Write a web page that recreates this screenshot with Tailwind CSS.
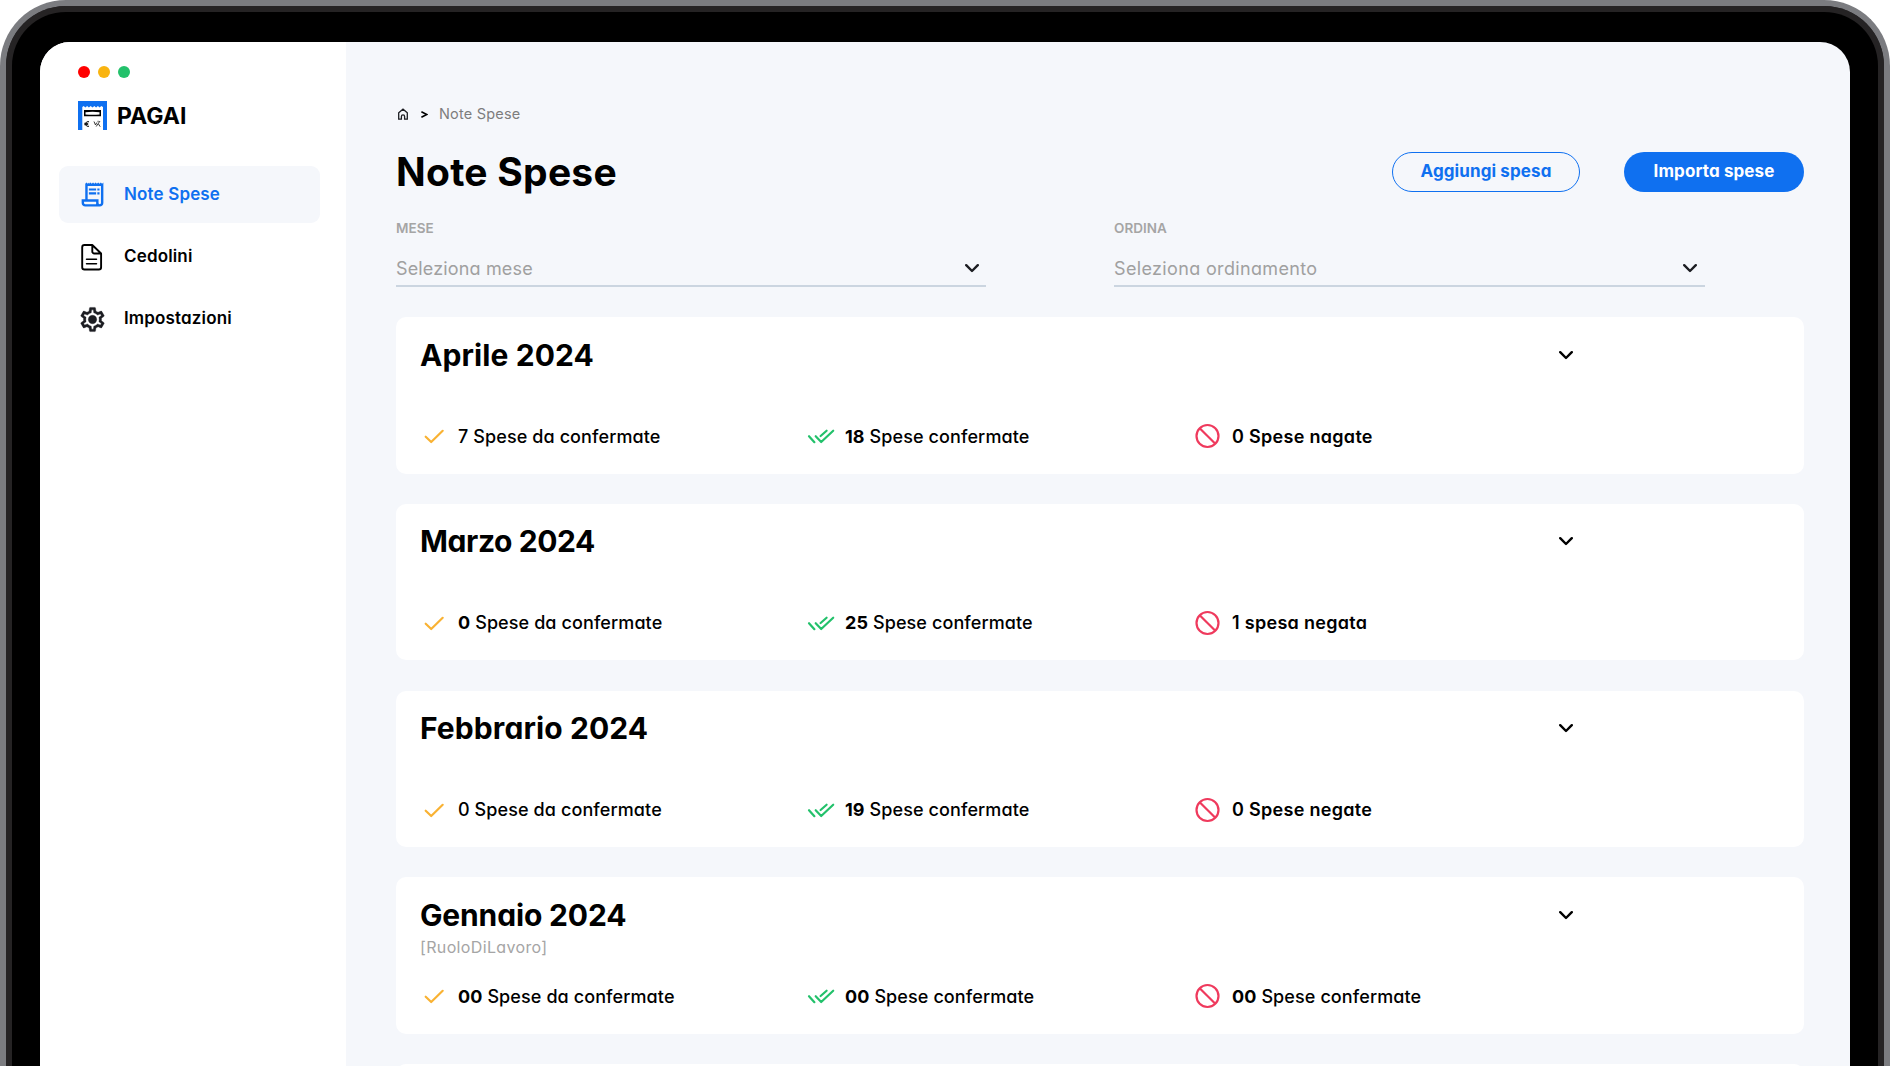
<!DOCTYPE html>
<html lang="it">
  <head>
    <meta charset="UTF-8" />
    <meta name="viewport" content="width=device-width, initial-scale=1.0" />
    <script src="https://cdn.jsdelivr.net/npm/@tailwindcss/browser@4"></script>
    <title>Pagai - Note Spese</title>
  </head>

<body class="h-screen overflow-hidden bg-white font-['Inter',sans-serif] [font-feature-settings:'cv11'] text-black">

<!-- Icons -->
<svg class="hidden" aria-hidden="true">
  <symbol id="chevron" viewBox="0 0 14 9" fill="none">
    <path d="M1.2 1.2 7 7 12.8 1.2" stroke="currentColor" stroke-width="2.4" stroke-linecap="round" stroke-linejoin="round" />
  </symbol>
  <symbol id="check" viewBox="0 0 28 28" fill="none">
    <path d="M5.7 14.7 11.2 20 22.7 8.8" stroke="#f9b233" stroke-width="2.2" stroke-linecap="round" stroke-linejoin="round" />
  </symbol>
  <symbol id="checks" viewBox="0 0 28 28" fill="none">
    <path d="M2 14.2 7.4 20.2M8.7 14.2 14.2 20 26.2 8.7M13.6 14 19.6 8.7" stroke="#23c16b" stroke-width="2.2" stroke-linecap="round" stroke-linejoin="round" />
  </symbol>
  <symbol id="ban" viewBox="0 0 28 28" fill="none">
    <circle cx="13.5" cy="14" r="11" stroke="#ef3a5d" stroke-width="2.2" />
    <path d="M5.7 6.2 21.3 21.8" stroke="#ef3a5d" stroke-width="2.2" />
  </symbol>
</svg>

<div class="h-screen w-[1890px] rounded-t-[66px] border-6 border-b-0 border-[#7b7c80] bg-[#252324]">
  <div class="h-full rounded-t-[60px] border-6 border-b-0 border-[#252324] bg-black px-7 pt-[30px]">
    <div class="flex h-full overflow-hidden rounded-t-[30px] bg-[#f5f7fb]">

      <!-- Sidebar -->
      <aside class="w-[306px] shrink-0 bg-white pl-[19px] pt-6">
        <div class="flex gap-2 pl-[19px]">
          <span class="size-3 rounded-full bg-[#ff0000]"></span>
          <span class="size-3 rounded-full bg-[#f9b410]"></span>
          <span class="size-3 rounded-full bg-[#23c16b]"></span>
        </div>

        <div class="mt-[23px] flex h-[29px] items-center pl-[19px]">
          <svg class="h-[29px] w-[29px]" viewBox="0 0 29 29">
            <path d="M0 0h29v29h-4V6l-1.700-1-1.700 1.400L19.900 5l-1.800 1.400L16.300 5l-1.800 1.400L12.700 5l-1.800 1.400L9.100 5 7.400 6.400 5.700 5 4.300 6V29H0z" fill="#0f70f0" />
            <path d="M6 9h17v6.300H6z" fill="#000" />
            <path d="M7.500 11.200q7-.9 14 0v2.200q-7 .9-14 0z" fill="#fff" />
            <path d="M11 20.800c-2-.8-3.200.5-3.200 2.200s1.200 3 3.200 2.200M6.300 22.300h3.900M6.300 23.700h3.900" fill="none" stroke="#000" stroke-width="1" />
            <path d="M16 20.500l1.500 3.500 1.300-2.500M22 20 18.200 25.500M19.500 20.300h1.200M20.500 23l1.700 2.700" fill="none" stroke="#222" stroke-width=".9" />
          </svg>
          <span class="ml-[10px] pt-0.5 text-[23px] font-bold">PAGAI</span>
        </div>

        <nav class="mt-9 flex w-[261px] flex-col gap-[5.300px] text-[17px] font-semibold tracking-[0.150px]">
          <a href="#" class="flex h-[57px] items-center gap-[17px] rounded-[9px] bg-[#f5f7fb] pl-[19px] text-[#0f70f0]">
            <svg class="size-[29px]" viewBox="0 0 24 24" fill="currentColor">
              <path d="M21 2l-1.070 1-1.070-1-1.070 1-1.070-1-1.070 1-1.070-1-1.070 1-1.070-1-1.070 1-1.070-1-1.070 1L9.200 2 8.130 3 7.070 2 6 3v13H3v3c0 1.660 1.340 3 3 3h12c1.660 0 3-1.340 3-3V2zM15 20H6c-.55 0-1-.45-1-1v-1h10v2zm4-1c0 .55-.45 1-1 1s-1-.45-1-1v-3H8V5h11v14z" />
              <path d="M9 7h6v1.700H9zM16 7h1.800v1.700H16zM9 10.200h6v1.700H9zM16 10.200h1.800v1.700H16z" />
            </svg>
            Note Spese
          </a>
          <a href="#" class="flex h-[57px] items-center gap-[17px] pl-[19px]">
            <svg class="size-[29px]" viewBox="0 0 29 29" fill="none" stroke="currentColor" stroke-width="1.900" stroke-linejoin="round">
              <path d="M14.300 3H6.500a2.300 2.300 0 0 0-2.300 2.300v19.900a2.300 2.300 0 0 0 2.300 2.300h14.300a2.300 2.300 0 0 0 2.300-2.300V11.500zM14.300 3v6.500a2 2 0 0 0 2 2H23" />
              <path d="M8.500 17.300h10M8.500 21.800h10" stroke-width="1.500" stroke-linecap="round" />
            </svg>
            Cedolini
          </a>
          <a href="#" class="flex h-[57px] items-center gap-[17px] pl-[19px]">
            <svg class="size-[29px] text-[#1c1d22]" viewBox="0 0 24 24" fill="currentColor" stroke="currentColor" stroke-width=".3">
              <path d="M19.430 12.980c.04-.32.07-.64.07-.98 0-.34-.03-.66-.07-.98l2.110-1.650c.19-.15.24-.42.12-.64l-2-3.460c-.09-.16-.26-.25-.44-.25-.06 0-.12.010-.17.030l-2.490 1c-.52-.4-1.080-.73-1.690-.98l-.38-2.650C14.460 2.180 14.250 2 14 2h-4c-.25 0-.46.18-.49.42l-.38 2.650c-.61.25-1.170.59-1.690.98l-2.490-1c-.06-.02-.12-.03-.18-.03-.17 0-.34.09-.43.25l-2 3.460c-.13.22-.07.49.12.64l2.110 1.650c-.04.32-.07.65-.07.98 0 .33.030.66.070.98l-2.110 1.650c-.19.15-.24.42-.12.64l2 3.460c.09.16.26.25.44.25.06 0 .12-.01.17-.03l2.490-1c.52.4 1.080.73 1.690.98l.38 2.650c.03.24.24.42.49.42h4c.25 0 .46-.18.49-.42l.38-2.650c.61-.25 1.170-.59 1.690-.98l2.490 1c.06.02.12.03.18.03.17 0 .34-.09.43-.25l2-3.460c.12-.22.07-.49-.12-.64l-2.110-1.650zm-1.980-1.710c.04.31.05.52.05.73 0 .21-.02.43-.05.73l-.14 1.130.89.7 1.080.84-.7 1.210-1.270-.51-1.040-.42-.9.68c-.43.32-.84.56-1.250.73l-1.060.43-.16 1.130-.2 1.350h-1.400l-.19-1.350-.16-1.130-1.060-.43c-.43-.18-.83-.41-1.230-.71l-.91-.7-1.060.43-1.270.51-.7-1.210 1.080-.84.89-.7-.14-1.130c-.03-.31-.05-.54-.05-.74s.02-.43.05-.73l.14-1.130-.89-.7-1.080-.84.7-1.210 1.270.51 1.040.42.9-.68c.43-.32.84-.56 1.250-.73l1.060-.43.16-1.130.2-1.350h1.390l.19 1.350.16 1.130 1.060.43c.43.18.83.41 1.230.71l.91.7 1.060-.43 1.270-.51.7 1.210-1.070.85-.89.7.14 1.130z" />
              <circle cx="12" cy="12" r="3.500" />
            </svg>
            Impostazioni
          </a>
        </nav>
      </aside>

      <!-- Content -->
      <main class="flex-1 pl-[50px] pr-[46px] pt-[60px]">
        <div class="flex h-6 items-center text-[14.500px] tracking-[0.200px] text-[#7d7d7d]">
          <svg class="ml-px h-3 w-3 text-[#1c1d22]" viewBox="0 0 12 12" fill="none" stroke="currentColor" stroke-width="1.300">
            <path d="M1.700 11.200V4.700L6 1.200l4.300 3.500v6.500H7.600V8.500a1.600 1.600 0 0 0-3.200 0v2.700z" />
          </svg>
          <svg class="ml-[12px] h-[7px] w-[7px] text-black" viewBox="0 0 7 7" fill="none" stroke="currentColor" stroke-width="1.600">
            <path d="M.4.700 5.800 3.500.4 6.300" />
          </svg>
          <span class="ml-[11px]">Note Spese</span>
        </div>

        <div class="mt-[23px] flex h-[45px] items-center">
          <h1 class="pt-0.5 text-[39px] font-bold tracking-[0.250px]">Note Spese</h1>
          <div class="ml-auto flex gap-11 text-[17px] font-bold tracking-[0.100px]">
            <button class="h-10 w-[188px] rounded-full border border-[#0f70f0] text-[#0f70f0]">Aggiungi spesa</button>
            <button class="h-10 w-[180px] rounded-full bg-[#0f70f0] text-white">Importa spese</button>
          </div>
        </div>

        <div class="mt-6 flex gap-32">
          <div class="w-[590px]">
            <label class="block text-[13.500px] leading-5 font-semibold text-[#a5a5a5]">MESE</label>
            <div class="mt-1.5 flex h-[43px] items-center justify-between border-b-2 border-[#cbd5e0] pr-[7px] pt-2 text-[18px] tracking-[0.150px] text-[#a0a0a0]">
              Seleziona mese
              <svg class="h-[9px] w-[14px] text-[#1c1d22]"><use href="#chevron" /></svg>
            </div>
          </div>
          <div class="w-[591px]">
            <label class="block text-[13.500px] leading-5 font-semibold text-[#a5a5a5]">ORDINA</label>
            <div class="mt-1.5 flex h-[43px] items-center justify-between border-b-2 border-[#cbd5e0] pr-2 pt-2 text-[18px] tracking-[0.350px] text-[#a0a0a0]">
              Seleziona ordinamento
              <svg class="h-[9px] w-[14px] text-[#1c1d22]"><use href="#chevron" /></svg>
            </div>
          </div>
        </div>

        <div class="mt-[30px] flex w-[1408px] flex-col gap-[30.200px] text-[18px] font-medium tracking-[0.100px]">
          <div class="h-[156.600px] rounded-[10px] bg-white pl-6 pt-[18px]">
            <div class="flex h-10 w-[1153px] items-center justify-between">
              <h2 class="text-[30px] font-bold">Aprile 2024</h2>
              <svg class="h-[9px] w-[14px]"><use href="#chevron" /></svg>
            </div>
            <div class="mt-[47px] grid grid-cols-[387px_387px_387px]">
              <p class="flex items-center gap-2.5"><svg class="size-7"><use href="#check" /></svg><span>7 Spese da confermate</span></p>
              <p class="flex items-center gap-2.5"><svg class="size-7"><use href="#checks" /></svg><span><b>18</b> Spese confermate</span></p>
              <p class="flex items-center gap-2.5 font-semibold tracking-[0.300px]"><svg class="size-7"><use href="#ban" /></svg><span>0 Spese nagate</span></p>
            </div>
          </div>

          <div class="h-[156.600px] rounded-[10px] bg-white pl-6 pt-[18px]">
            <div class="flex h-10 w-[1153px] items-center justify-between">
              <h2 class="text-[30px] font-bold tracking-[-0.400px]">Marzo 2024</h2>
              <svg class="h-[9px] w-[14px]"><use href="#chevron" /></svg>
            </div>
            <div class="mt-[47px] grid grid-cols-[387px_387px_387px]">
              <p class="flex items-center gap-2.5"><svg class="size-7"><use href="#check" /></svg><span><b>0</b> Spese da confermate</span></p>
              <p class="flex items-center gap-2.5"><svg class="size-7"><use href="#checks" /></svg><span><b>25</b> Spese confermate</span></p>
              <p class="flex items-center gap-2.5 font-semibold tracking-[0.300px]"><svg class="size-7"><use href="#ban" /></svg><span>1 spesa negata</span></p>
            </div>
          </div>

          <div class="h-[156.600px] rounded-[10px] bg-white pl-6 pt-[18px]">
            <div class="flex h-10 w-[1153px] items-center justify-between">
              <h2 class="text-[30px] font-bold">Febbrario 2024</h2>
              <svg class="h-[9px] w-[14px]"><use href="#chevron" /></svg>
            </div>
            <div class="mt-[47px] grid grid-cols-[387px_387px_387px]">
              <p class="flex items-center gap-2.5"><svg class="size-7"><use href="#check" /></svg><span>0 Spese da confermate</span></p>
              <p class="flex items-center gap-2.5"><svg class="size-7"><use href="#checks" /></svg><span><b>19</b> Spese confermate</span></p>
              <p class="flex items-center gap-2.5 font-semibold tracking-[0.300px]"><svg class="size-7"><use href="#ban" /></svg><span>0 Spese negate</span></p>
            </div>
          </div>

          <div class="h-[156.600px] rounded-[10px] bg-white pl-6 pt-[18px]">
            <div class="flex h-10 w-[1153px] items-center justify-between">
              <h2 class="text-[30px] font-bold tracking-[-0.150px]">Gennaio 2024</h2>
              <svg class="h-[9px] w-[14px]"><use href="#chevron" /></svg>
            </div>
            <p class="h-[47px] text-[16px] leading-[25px] font-normal tracking-[0.350px] text-[#a5a5a5]">[RuoloDiLavoro]</p>
            <div class="grid grid-cols-[387px_387px_387px]">
              <p class="flex items-center gap-2.5"><svg class="size-7"><use href="#check" /></svg><span><b>00</b> Spese da confermate</span></p>
              <p class="flex items-center gap-2.5"><svg class="size-7"><use href="#checks" /></svg><span><b>00</b> Spese confermate</span></p>
              <p class="flex items-center gap-2.5"><svg class="size-7"><use href="#ban" /></svg><span><b>00</b> Spese confermate</span></p>
            </div>
          </div>

          <div class="h-[156.600px] rounded-[10px] bg-white"></div>
        </div>
      </main>
    </div>
  </div>
</div>

</body>
</html>
